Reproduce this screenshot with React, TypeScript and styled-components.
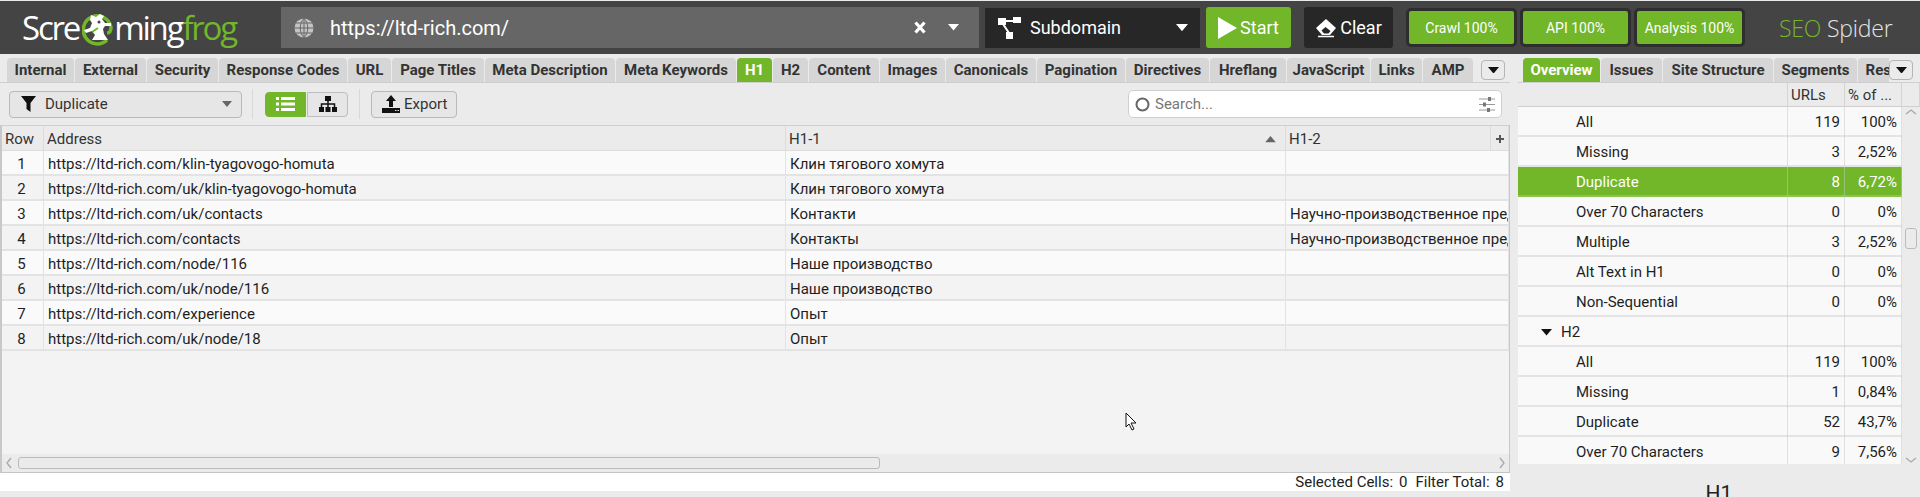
import React from 'react';
import styled, { createGlobalStyle } from 'styled-components';

const GREEN = '#72b62a';

const GlobalStyle = createGlobalStyle`
  html, body {
    margin: 0;
    height: 497px;
    overflow: hidden;
    background: #ebebeb;
    font-family: Roboto, "Liberation Sans", sans-serif;
  }
  * { box-sizing: border-box; }
`;

const Page = styled.div`
  position: relative;
  width: 1920px;
  height: 497px;
  overflow: hidden;
  padding-top: 1px;
`;

/* top bar */
const Header = styled.header`
  display: flex;
  align-items: center;
  height: 53px;
  background: #444444;
  padding-left: 22px;
`;

const Logo = styled.div`
  display: flex;
  align-items: center;
  width: 259px;
  height: 40px;
  font-family: "Open Sans", sans-serif;
  font-weight: 400;
  font-size: 33px;
  letter-spacing: -2.2px;
  color: #ffffff;
  svg { margin: 2px 1px 0 3px; flex: none; }
`;

const LogoGreen = styled.span`
  color: ${GREEN};
`;

const UrlBar = styled.div`
  display: flex;
  align-items: center;
  width: 698px;
  height: 41px;
  background: #666666;
  color: #ffffff;
  font-size: 20px;
  padding: 0 20px 0 13px;
  margin-right: 6px;
`;

const UrlText = styled.span`
  flex: 1;
  margin-left: 16px;
`;

const UrlGap = styled.span`
  width: 22px;
`;

const ScopeSelect = styled.div`
  display: flex;
  align-items: center;
  width: 215px;
  height: 40px;
  background: #272727;
  color: #ffffff;
  font-size: 18px;
  padding: 0 12px 0 13px;
  margin-right: 6px;
`;

const ScopeLabel = styled.span`
  flex: 1;
  margin-left: 9px;
`;

const HeaderButton = styled.div<{ $green?: boolean; $width: number; $mr: number }>`
  display: flex;
  align-items: center;
  justify-content: center;
  gap: 3px;
  width: ${(p) => p.$width}px;
  height: 41px;
  margin-right: ${(p) => p.$mr}px;
  border-radius: 3px;
  font-size: 18px;
  color: #ffffff;
  background: ${(p) => (p.$green ? GREEN : '#272727')};
`;

const Progress = styled.div`
  display: flex;
  align-items: center;
  justify-content: center;
  width: 111px;
  height: 39px;
  margin-right: 3px;
  border: 3px solid #2e2e2e;
  border-radius: 5px;
  background: ${GREEN};
  color: #ffffff;
  font-size: 14px;
`;

const Brand = styled.div`
  margin-left: 31px;
  font-family: "Open Sans", sans-serif;
  font-size: 23px;
  font-weight: 300;
  letter-spacing: -0.2px;
  color: #e4e4e4;
`;

/* two panes under the bar */
const Panes = styled.div`
  display: grid;
  grid-template-columns: 1510px 402px;
  column-gap: 8px;
  padding-top: 4px;
`;

const Pane = styled.section`
  display: flex;
  flex-direction: column;
  min-width: 0;
  overflow: hidden;
`;

const TabStrip = styled.nav<{ $inset: number; $end: number }>`
  position: relative;
  flex: none;
  height: 25px;
  padding: 0 ${(p) => p.$end}px 0 ${(p) => p.$inset}px;
  border-bottom: 1px solid #cfcfcf;
`;

const TabList = styled.div`
  display: flex;
  gap: 1px;
  height: 24px;
  overflow: hidden;
`;

const Tab = styled.div<{ $active?: boolean; $width: number }>`
  flex: none;
  display: flex;
  align-items: center;
  justify-content: center;
  width: ${(p) => p.$width}px;
  height: 24px;
  border-radius: 4px 4px 0 0;
  font-size: 15px;
  font-weight: 700;
  white-space: nowrap;
  background: ${(p) => (p.$active ? GREEN : '#d6d6d6')};
  color: ${(p) => (p.$active ? '#ffffff' : '#333333')};
`;

const TabMenu = styled.div<{ $right: number }>`
  position: absolute;
  top: 2px;
  right: ${(p) => p.$right}px;
  display: flex;
  align-items: center;
  justify-content: center;
  width: 24px;
  height: 20px;
  border: 1px solid #b5b5b5;
  border-radius: 4px;
  background: #ebebeb;
`;

const Toolbar = styled.div`
  display: flex;
  align-items: center;
  flex: none;
  height: 42px;
  padding-left: 9px;
`;

const FilterSelect = styled.div`
  display: flex;
  align-items: center;
  width: 233px;
  height: 27px;
  padding: 0 9px 0 11px;
  border: 1px solid #b9b9b9;
  border-radius: 4px;
  background: #e6e6e6;
  font-size: 15px;
  color: #333333;
`;

const FilterLabel = styled.span`
  flex: 1;
  margin-left: 9px;
`;

const Divider = styled.div<{ $ml: number; $mr: number }>`
  width: 1px;
  height: 30px;
  margin: 0 ${(p) => p.$mr}px 0 ${(p) => p.$ml}px;
  background: #d8d8d8;
`;

const ViewToggle = styled.div<{ $active?: boolean }>`
  display: flex;
  align-items: center;
  justify-content: center;
  width: 41px;
  height: 25px;
  margin-right: 1px;
  border: 1px solid ${(p) => (p.$active ? GREEN : '#bdbdbd')};
  border-radius: ${(p) => (p.$active ? '4px 0 0 4px' : '0 4px 4px 0')};
  background: ${(p) => (p.$active ? GREEN : '#e6e6e6')};
`;

const ExportButton = styled.div`
  display: flex;
  align-items: center;
  gap: 4px;
  width: 86px;
  height: 27px;
  padding-left: 10px;
  border: 1px solid #b9b9b9;
  border-radius: 4px;
  background: #e6e6e6;
  font-size: 15px;
  color: #333333;
`;

const SearchBox = styled.div`
  display: flex;
  align-items: center;
  gap: 5px;
  width: 374px;
  height: 28px;
  margin-left: auto;
  margin-right: 8px;
  padding: 0 6px;
  border: 1px solid #cfcfcf;
  border-radius: 5px;
  background: #ffffff;
  font-size: 15px;
  color: #777777;
`;

const SearchHint = styled.span`
  flex: 1;
`;

/* crawl table */
const COLS = '42px 742px 500px 205px 18px';

const TableFrame = styled.div`
  position: relative;
  display: flex;
  flex-direction: column;
  flex: none;
  height: 348px;
  border-left: 2px solid #c8c8c8;
  border-right: 1px solid #c8c8c8;
  border-top: 1px solid #cfcfcf;
  border-bottom: 1px solid #c4c4c4;
  background: #f3f3f3;
`;

const TableHead = styled.div`
  display: grid;
  grid-template-columns: ${COLS};
  height: 25px;
  flex: none;
  background: #ebebeb;
  box-shadow: inset 0 -1px 0 #dcdcdc;
`;

const HeadCell = styled.div<{ $center?: boolean }>`
  display: flex;
  align-items: center;
  justify-content: ${(p) => (p.$center ? 'center' : 'space-between')};
  padding: 1px ${(p) => (p.$center ? 0 : 9)}px 0 ${(p) => (p.$center ? 0 : 3)}px;
  border-right: 1px solid #dcdcdc;
  font-size: 15px;
  color: #333333;
`;

const SortMark = styled.span`
  display: flex;
  transform: rotate(180deg);
`;

const TableBody = styled.div`
  flex: 1;
  min-height: 0;
`;

const DataRow = styled.div<{ $odd: boolean }>`
  display: grid;
  grid-template-columns: ${COLS};
  height: 25px;
  background: ${(p) => (p.$odd ? '#fafafa' : '#f3f3f3')};
  box-shadow: inset 0 -2px 0 #e3e3e3;
`;

const DataCell = styled.div<{ $center?: boolean; $wide?: boolean }>`
  padding: 0 ${(p) => (p.$center ? 2 : 0)}px 0 ${(p) => (p.$center ? 0 : 4)}px;
  border-right: 1px solid #e3e3e3;
  text-align: ${(p) => (p.$center ? 'center' : 'left')};
  ${(p) => p.$wide && 'grid-column: span 2;'}
  font-size: 15px;
  line-height: 27px;
  color: #1e1e1e;
  white-space: nowrap;
  overflow: hidden;
`;

const HScroll = styled.div`
  display: flex;
  align-items: center;
  flex: none;
  height: 18px;
  padding: 0 3px;
  background: #ebebeb;
`;

const HThumb = styled.div`
  width: 862px;
  height: 12px;
  margin-left: 5px;
  border: 1px solid #bbbbbb;
  border-radius: 3px;
  background: #ebebeb;
`;

const HScrollEnd = styled.div`
  margin-left: auto;
  display: flex;
`;

const StatusBar = styled.div`
  display: flex;
  justify-content: flex-end;
  gap: 8px;
  flex: none;
  height: 18px;
  padding-right: 6px;
  background: #ffffff;
  font-size: 15px;
  line-height: 18px;
  color: #222222;
`;

const StatusPair = styled.span`
  display: flex;
  gap: 6px;
`;

/* overview */
const SIDE_COLS = '270px 57px 57px';

const SideHead = styled.div`
  display: grid;
  grid-template-columns: ${SIDE_COLS} 18px;
  height: 24px;
  flex: none;
  border-bottom: 1px solid #cfcfcf;
`;

const SideHeadCell = styled.div`
  display: flex;
  align-items: center;
  padding-left: 3px;
  border-right: 1px solid #d4d4d4;
  font-size: 15px;
  color: #333333;
  white-space: nowrap;
`;

const SideBody = styled.div`
  display: grid;
  grid-template-columns: 384px 18px;
  height: 357px;
  flex: none;
`;

const SideRows = styled.div`
  height: 357px;
  overflow: hidden;
`;

const SideRow = styled.div<{ $selected?: boolean }>`
  display: grid;
  grid-template-columns: ${SIDE_COLS};
  height: 30px;
  background: ${(p) => (p.$selected ? GREEN : '#f9f9f9')};
  box-shadow: inset 0 -2px 0 ${(p) => (p.$selected ? '#8ac44d' : '#e4e4e4')};
  color: ${(p) => (p.$selected ? '#ffffff' : '#1e1e1e')};
  font-size: 15px;
  line-height: 31px;
`;

const SideName = styled.div<{ $group?: boolean }>`
  display: flex;
  align-items: center;
  gap: 9px;
  padding-left: ${(p) => (p.$group ? 23 : 58)}px;
  border-right: 1px solid rgba(200, 200, 200, 0.5);
`;

const SideNum = styled.div`
  padding-right: 4px;
  text-align: right;
  border-right: 1px solid rgba(200, 200, 200, 0.5);
`;

const VScroll = styled.div`
  position: relative;
  background: #ebebeb;
`;

const VThumb = styled.div`
  position: absolute;
  top: 121px;
  left: 3px;
  width: 12px;
  height: 21px;
  border: 1px solid #bbbbbb;
  border-radius: 3px;
`;

const VArrow = styled.div<{ $down?: boolean }>`
  position: absolute;
  left: 3px;
  ${(p) => (p.$down ? 'bottom: 0;' : 'top: 1px;')}
  line-height: 0;
`;

const SideTitle = styled.div`
  margin-top: 17px;
  text-align: center;
  font-size: 21px;
  line-height: 24px;
  color: #222222;
`;

const Pointer = styled.svg`
  position: absolute;
  left: 1125px;
  top: 412px;
`;

const leftTabs: [string, number, boolean?][] = [
  ['Internal', 67], ['External', 71], ['Security', 71], ['Response Codes', 128], ['URL', 43],
  ['Page Titles', 92], ['Meta Description', 130], ['Meta Keywords', 120], ['H1', 35, true],
  ['H2', 35], ['Content', 70], ['Images', 65], ['Canonicals', 90], ['Pagination', 88],
  ['Directives', 83], ['Hreflang', 76], ['JavaScript', 83], ['Links', 51], ['AMP', 50],
];

const rightTabs: [string, number, boolean?][] = [
  ['Overview', 77, true], ['Issues', 61], ['Site Structure', 110], ['Segments', 83], ['Response Codes', 128],
];

const rows = [
  ['https://ltd-rich.com/klin-tyagovogo-homuta', 'Клин тягового хомута', ''],
  ['https://ltd-rich.com/uk/klin-tyagovogo-homuta', 'Клин тягового хомута', ''],
  ['https://ltd-rich.com/uk/contacts', 'Контакти', 'Научно-производственное предприятие'],
  ['https://ltd-rich.com/contacts', 'Контакты', 'Научно-производственное предприятие'],
  ['https://ltd-rich.com/node/116', 'Наше производство', ''],
  ['https://ltd-rich.com/uk/node/116', 'Наше производство', ''],
  ['https://ltd-rich.com/experience', 'Опыт', ''],
  ['https://ltd-rich.com/uk/node/18', 'Опыт', ''],
];

const overview: { name: string; urls?: string; pct?: string; selected?: boolean; group?: boolean }[] = [
  { name: 'All', urls: '119', pct: '100%' },
  { name: 'Missing', urls: '3', pct: '2,52%' },
  { name: 'Duplicate', urls: '8', pct: '6,72%', selected: true },
  { name: 'Over 70 Characters', urls: '0', pct: '0%' },
  { name: 'Multiple', urls: '3', pct: '2,52%' },
  { name: 'Alt Text in H1', urls: '0', pct: '0%' },
  { name: 'Non-Sequential', urls: '0', pct: '0%' },
  { name: 'H2', group: true },
  { name: 'All', urls: '119', pct: '100%' },
  { name: 'Missing', urls: '1', pct: '0,84%' },
  { name: 'Duplicate', urls: '52', pct: '43,7%' },
  { name: 'Over 70 Characters', urls: '9', pct: '7,56%' },
];

const Caret = ({ color, size = 12 }: { color: string; size?: number }) => (
  <svg width={size} height={size * 0.6} viewBox="0 0 10 6">
    <path d="M0 0h10L5 6z" fill={color} />
  </svg>
);

const Chevron = ({ dir }: { dir: 'left' | 'right' | 'up' | 'down' }) => {
  const d = { left: 'M6 1L2 6l4 5', right: 'M2 1l4 5-4 5', up: 'M1 6l5-4 5 4', down: 'M1 2l5 4 5-4' }[dir];
  const horizontal = dir === 'left' || dir === 'right';
  return (
    <svg width={horizontal ? 8 : 12} height={horizontal ? 12 : 8} viewBox={horizontal ? '0 0 8 12' : '0 0 12 8'}>
      <path d={d} fill="none" stroke="#a8a8a8" strokeWidth="1.3" />
    </svg>
  );
};

const FrogMark = () => (
  <svg width="31" height="34" viewBox="0 0 31 34">
    <path d="M25 28A14 14 0 1 1 29 15c0 3-1 6-4 6" fill="none" stroke={GREEN} strokeWidth="3.500" />
    <path
      d="M9 3l5 2 4-3 4 2-2 3 3 4 6 0 0 3-6 0-2 3 1 5 4 6H10l3-5-3-4-6 2-2-3 6-2 2-5-2-3z"
      fill="#ffffff"
    />
    <circle cx="17" cy="10" r="1.500" fill="#444444" />
    <path d="M10 20l6-4" stroke={GREEN} strokeWidth="2" />
  </svg>
);

const GlobeIcon = () => (
  <svg width="20" height="20" viewBox="0 0 20 20">
    <circle cx="10" cy="10" r="9.500" fill="#c4c4c4" />
    <path d="M10 0v20M0 10h20M2 5h16M2 15h16M10 .5C5 5 5 15 10 19.500M10 .5c5 4.500 5 14.500 0 19" fill="none" stroke="#666666" strokeWidth="1" />
  </svg>
);

const CloseIcon = () => (
  <svg width="12" height="13" viewBox="0 0 12 13">
    <path d="M1.500 1.500l9 10M10.500 1.500l-9 10" stroke="#ffffff" strokeWidth="3.200" />
  </svg>
);

const NetworkIcon = () => (
  <svg width="23" height="22" viewBox="0 0 23 22">
    <path d="M0 1h8v7H0zM15 0h8v6h-8zM8 15h7v7H8z" fill="#ffffff" />
    <path d="M6 4h11M5 7l6 9" stroke="#ffffff" strokeWidth="2" />
  </svg>
);

const PlayIcon = () => (
  <svg width="19" height="22" viewBox="0 0 19 22">
    <path d="M0 0l19 11L0 22z" fill="#ffffff" />
  </svg>
);

const EraserIcon = () => (
  <svg width="22" height="20" viewBox="0 0 22 20">
    <path d="M11 1l10 9-6 7H7l-6-7z" fill="#ffffff" />
    <path d="M6.500 12.500l4-3.500 5 4-2 2.500H9z" fill="#272727" />
    <path d="M3 18.500h16" stroke="#ffffff" strokeWidth="1.500" />
  </svg>
);

const FunnelIcon = () => (
  <svg width="15" height="16" viewBox="0 0 15 16">
    <path d="M0 0h15L9.500 7v9l-4-3V7z" fill="#111111" />
  </svg>
);

const ListIcon = () => (
  <svg width="19" height="14" viewBox="0 0 19 14">
    <path d="M0 0h3v3H0zM5 0h14v3H5zM0 5.500h3v3H0zM5 5.500h14v3H5zM0 11h3v3H0zM5 11h14v3H5z" fill="#ffffff" />
  </svg>
);

const TreeIcon = () => (
  <svg width="18" height="16" viewBox="0 0 18 16">
    <path d="M6 0h6v5H6zM0 11h5v5H0zM6.500 11h5v5h-5zM13 11h5v5h-5z" fill="#111111" />
    <path d="M9 5v6M2.500 11V8h13v3" fill="none" stroke="#111111" strokeWidth="1.500" />
  </svg>
);

const ExportIcon = () => (
  <svg width="18" height="18" viewBox="0 0 18 18">
    <path d="M9 0l5 6h-3v6H7V6H4z" fill="#111111" />
    <path d="M0 13h18v5H0z" fill="#111111" />
    <path d="M13 15.500h1.500M15.500 15.500H17" stroke="#e6e6e6" strokeWidth="1" />
  </svg>
);

const SearchRing = () => (
  <svg width="15" height="15" viewBox="0 0 15 15">
    <circle cx="7.500" cy="7.500" r="6" fill="none" stroke="#666666" strokeWidth="2" />
  </svg>
);

const SlidersIcon = () => (
  <svg width="16" height="15" viewBox="0 0 16 15">
    <path d="M0 2h16M0 7.500h16M0 13h16" stroke="#999999" strokeWidth="1" />
    <path d="M9 0h3v4H9zM4 5.500h3v4H4zM8 11h3v4H8z" fill="#777777" />
  </svg>
);

export default function App() {
  return (
    <Page>
      <GlobalStyle />
      <Header>
        <Logo>
          Scre
          <FrogMark />
          ming<LogoGreen>frog</LogoGreen>
        </Logo>
        <UrlBar>
          <GlobeIcon />
          <UrlText>https://ltd-rich.com/</UrlText>
          <CloseIcon />
          <UrlGap />
          <Caret color="#ffffff" size={11} />
        </UrlBar>
        <ScopeSelect>
          <NetworkIcon />
          <ScopeLabel>Subdomain</ScopeLabel>
          <Caret color="#ffffff" size={12} />
        </ScopeSelect>
        <HeaderButton $green $width={85} $mr={13}>
          <PlayIcon />
          Start
        </HeaderButton>
        <HeaderButton $width={89} $mr={13}>
          <EraserIcon />
          Clear
        </HeaderButton>
        <Progress>Crawl 100%</Progress>
        <Progress>API 100%</Progress>
        <Progress>Analysis 100%</Progress>
        <Brand>
          <LogoGreen>SEO</LogoGreen> Spider
        </Brand>
      </Header>

      <Panes>
        <Pane>
          <TabStrip $inset={7} $end={33}>
            <TabList>
              {leftTabs.map(([label, width, active]) => (
                <Tab key={label} $active={active} $width={width}>
                  {label}
                </Tab>
              ))}
            </TabList>
            <TabMenu $right={5}>
              <Caret color="#111111" size={11} />
            </TabMenu>
          </TabStrip>
          <Toolbar>
            <FilterSelect>
              <FunnelIcon />
              <FilterLabel>Duplicate</FilterLabel>
              <Caret color="#666666" size={10} />
            </FilterSelect>
            <Divider $ml={10} $mr={12} />
            <ViewToggle $active>
              <ListIcon />
            </ViewToggle>
            <ViewToggle>
              <TreeIcon />
            </ViewToggle>
            <Divider $ml={10} $mr={11} />
            <ExportButton>
              <ExportIcon />
              Export
            </ExportButton>
            <SearchBox>
              <SearchRing />
              <SearchHint>Search...</SearchHint>
              <SlidersIcon />
            </SearchBox>
          </Toolbar>
          <TableFrame>
            <TableHead>
              <HeadCell>Row</HeadCell>
              <HeadCell>Address</HeadCell>
              <HeadCell>
                H1-1
                <SortMark>
                  <Caret color="#666666" size={11} />
                </SortMark>
              </HeadCell>
              <HeadCell>H1-2</HeadCell>
              <HeadCell $center>
                <svg width="8" height="8" viewBox="0 0 8 8">
                  <path d="M3 0h2v3h3v2H5v3H3V5H0V3h3z" fill="#555555" />
                </svg>
              </HeadCell>
            </TableHead>
            <TableBody>
              {rows.map((row, i) => (
                <DataRow key={row[0]} $odd={i % 2 === 0}>
                  <DataCell $center>{i + 1}</DataCell>
                  <DataCell>{row[0]}</DataCell>
                  <DataCell>{row[1]}</DataCell>
                  <DataCell $wide>{row[2]}</DataCell>
                </DataRow>
              ))}
            </TableBody>
            <HScroll>
              <Chevron dir="left" />
              <HThumb />
              <HScrollEnd>
                <Chevron dir="right" />
              </HScrollEnd>
            </HScroll>
          </TableFrame>
          <StatusBar>
            <StatusPair>
              <span>Selected Cells:</span>
              <span>0</span>
            </StatusPair>
            <StatusPair>
              <span>Filter Total:</span>
              <span>8</span>
            </StatusPair>
          </StatusBar>
        </Pane>

        <Pane>
          <TabStrip $inset={5} $end={31}>
            <TabList>
              {rightTabs.map(([label, width, active]) => (
                <Tab key={label} $active={active} $width={width}>
                  {label}
                </Tab>
              ))}
            </TabList>
            <TabMenu $right={7}>
              <Caret color="#111111" size={11} />
            </TabMenu>
          </TabStrip>
          <SideHead>
            <SideHeadCell />
            <SideHeadCell>URLs</SideHeadCell>
            <SideHeadCell>% of ...</SideHeadCell>
            <SideHeadCell />
          </SideHead>
          <SideBody>
            <SideRows>
              {overview.map((item, i) => (
                <SideRow key={i} $selected={item.selected}>
                  <SideName $group={item.group}>
                    {item.group && <Caret color="#111111" size={11} />}
                    {item.name}
                  </SideName>
                  <SideNum>{item.urls}</SideNum>
                  <SideNum>{item.pct}</SideNum>
                </SideRow>
              ))}
            </SideRows>
            <VScroll>
              <VArrow>
                <Chevron dir="up" />
              </VArrow>
              <VThumb />
              <VArrow $down>
                <Chevron dir="down" />
              </VArrow>
            </VScroll>
          </SideBody>
          <SideTitle>H1</SideTitle>
        </Pane>
      </Panes>

      <Pointer width="13" height="20" viewBox="0 0 13 20">
        <path d="M1 1v14l3-3 3 6 2-1-3-6h5z" fill="#ffffff" stroke="#111111" strokeWidth="1" />
      </Pointer>
    </Page>
  );
}
